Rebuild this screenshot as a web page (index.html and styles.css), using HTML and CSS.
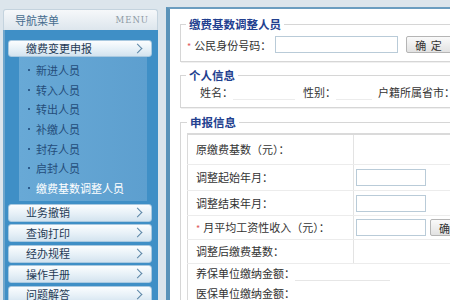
FILE: index.html
```html
<!DOCTYPE html>
<html lang="zh-CN">

<head>
    <meta charset="utf-8">
    <title>缴费基数调整人员</title>
    <link rel="stylesheet" href="styles.css">
</head>

<body>
    <div class="page">
        <aside class="nav">
            <div class="nav-head">
                <span class="nav-title">导航菜单</span>
                <span class="nav-menu">MENU</span>
            </div>
            <div class="nav-body">
                <a class="nav-btn">缴费变更申报<span class="chev"></span></a>
                <ul class="sub">
                    <li>新进人员</li>
                    <li>转入人员</li>
                    <li>转出人员</li>
                    <li>补缴人员</li>
                    <li>封存人员</li>
                    <li>启封人员</li>
                    <li class="on">缴费基数调整人员</li>
                </ul>
                <a class="nav-btn">业务撤销<span class="chev"></span></a>
                <a class="nav-btn">查询打印<span class="chev"></span></a>
                <a class="nav-btn">经办规程<span class="chev"></span></a>
                <a class="nav-btn">操作手册<span class="chev"></span></a>
                <a class="nav-btn">问题解答<span class="chev"></span></a>
            </div>
        </aside>

        <main class="content">
            <fieldset class="box box-search">
                <legend>缴费基数调整人员</legend>
                <div class="search-row">
                    <label><i class="req">*</i>公民身份号码：</label>
                    <input type="text" class="txt txt-id">
                    <button class="btn">确 定</button>
                </div>
            </fieldset>

            <fieldset class="box box-person">
                <legend>个人信息</legend>
                <div class="person-row">
                    <span class="pl">姓名：</span><span class="pv pv-name"></span>
                    <span class="pl">性别：</span><span class="pv pv-sex"></span>
                    <span class="pl">户籍所属省市：</span>
                </div>
            </fieldset>

            <fieldset class="box box-report">
                <legend>申报信息</legend>
                <table class="grid">
                    <colgroup>
                        <col class="c1">
                        <col>
                    </colgroup>
                    <tr class="r1">
                        <td>原缴费基数（元）：</td>
                        <td></td>
                    </tr>
                    <tr class="r2">
                        <td>调整起始年月：</td>
                        <td><input type="text" class="txt txt-s"></td>
                    </tr>
                    <tr class="r3">
                        <td>调整结束年月：</td>
                        <td><input type="text" class="txt txt-s"></td>
                    </tr>
                    <tr class="r4">
                        <td><i class="req">*</i>月平均工资性收入（元）：</td>
                        <td><input type="text" class="txt txt-s"><button class="btn btn-s">确 定</button></td>
                    </tr>
                    <tr class="r5">
                        <td>调整后缴费基数：</td>
                        <td></td>
                    </tr>
                    <tr class="r6">
                        <td colspan="2">养保单位缴纳金额：<span class="amt"></span></td>
                    </tr>
                    <tr class="r7">
                        <td colspan="2">医保单位缴纳金额：<span class="amt"></span></td>
                    </tr>
                </table>
            </fieldset>
        </main>
    </div>
</body>

</html>
```

FILE: styles.css
```css
* {
    box-sizing: border-box;
}

html,
body {
    margin: 0;
    height: 100%;
    overflow: hidden;
}

body {
    background: #dce5ec;
    font-family: "Noto Sans CJK SC", "DejaVu Sans", sans-serif;
    font-size: 11px;
    color: #333;
}

.page {
    display: flex;
    height: 100%;
    padding-left: 3px;
}

/* left navigation */

.nav {
    width: 155px;
    margin-top: 9px;
    flex: none;
    display: flex;
    flex-direction: column;
}

.nav-head {
    flex: none;
    height: 21px;
    display: flex;
    align-items: center;
    justify-content: space-between;
    padding: 0 8px 0 11px;
    background: linear-gradient(#f6f8fa, #dde6ed);
    border: 1px solid #c4d3de;
    border-bottom: none;
    border-radius: 3px 3px 0 0;
}

.nav-title {
    color: #456c8e;
    line-height: 1;
}

.nav-menu {
    font-family: "DejaVu Serif", serif;
    font-size: 8.5px;
    letter-spacing: 1px;
    color: #8e9aa4;
}

.nav-body {
    flex: 1;
    min-height: 0;
    background: #3f8fc6;
    border-left: 2px solid #6fa6cc;
    padding: 10px 0 0 3px;
}

.nav-btn {
    display: flex;
    align-items: center;
    position: relative;
    width: 144px;
    height: 18px;
    margin-bottom: 2.5px;
    padding-left: 17px;
    background: linear-gradient(#fbfdfe, #e6f0f7 55%, #d3e3ef);
    border: 1px solid #a9c9e0;
    border-radius: 3px;
    color: #1f3a55;
    line-height: 1;
}

.nav-btn:first-child {
    margin-bottom: 0;
    height: 17px;
}

.chev {
    position: absolute;
    right: 10px;
    top: 50%;
    width: 7px;
    height: 7px;
    margin-top: -4px;
    border-top: 1.5px solid #5c86a6;
    border-right: 1.5px solid #5c86a6;
    transform: rotate(45deg);
}

.sub {
    list-style: none;
    margin: 0 0 3px 11px;
    padding: 3px 0;
    width: 128px;
    background: linear-gradient(90deg, #68a9d6, #5d9fcf);
}

.sub li {
    height: 19.7px;
    display: flex;
    align-items: center;
    padding-left: 17px;
    position: relative;
    color: #244d7a;
}

.sub li::before {
    content: "";
    position: absolute;
    left: 9px;
    top: 9px;
    width: 2px;
    height: 2px;
    background: #2c5d8e;
}

.sub li.on {
    color: #fff;
}

/* main panel */

.content {
    flex: 1;
    margin: 7px 0 0 8px;
    background: #fff;
    border-left: 4px solid #5b93b9;
    border-top: 2px solid #6b9dc0;
    padding: 8px 0 0 10px;
    overflow: hidden;
}

.box {
    width: 330px;
    margin: 0;
    padding: 0 0 0 5px;
    border: 1px solid #d6d6d6;
    box-shadow: inset 1px 1px 0 #fff, 1px 1px 0 #f0f0f0;
}

.box legend {
    padding: 0 3px;
    font-size: 11.5px;
    font-weight: bold;
    line-height: 14px;
    color: #22408f;
}

.box-search {
    height: 45px;
}

.search-row {
    display: flex;
    align-items: center;
    margin-top: 5px;
    padding-left: 1px;
}

.req {
    font-style: normal;
    color: #e05a5a;
    margin-right: 3px;
    font-size: 9px;
}

.txt {
    height: 17px;
    border: 1px solid #b9cbd8;
    background: #fff;
    padding: 0 2px;
    font: inherit;
}

.txt-id {
    width: 123px;
    margin-left: 4px;
}

.btn {
    height: 17px;
    margin-left: 8px;
    padding: 0 8px;
    border: 1px solid #b5b5b5;
    border-radius: 2px;
    background: linear-gradient(#fafafa, #e2e2e2);
    font: inherit;
    color: #333;
    letter-spacing: 1px;
}

.box-person {
    margin-top: 6px;
    height: 40px;
}

.person-row {
    display: flex;
    align-items: center;
    padding: 2px 0 0 14px;
    height: 18px;
}

.pv {
    height: 14px;
    border-bottom: 1px solid #ececec;
    align-self: flex-end;
}

.pv-name {
    width: 62px;
    margin-right: 8px;
}

.pv-sex {
    width: 36px;
    margin-right: 6px;
}

.box-report {
    margin-top: 7px;
    padding: 4px 0 0 6px;
    height: 200px;
}

.grid {
    width: 320px;
    table-layout: fixed;
    border-collapse: collapse;
    border-top: 2px solid #dadada;
    border-left: 1px solid #dadada;
}

.grid .c1 {
    width: 166px;
}

.grid td {
    padding: 0 0 0 8px;
    border-bottom: 1px solid #ececec;
    vertical-align: middle;
    white-space: nowrap;
}

.grid td:first-child:not([colspan]) {
    border-right: 1px solid #e3e3e3;
}

.grid td + td {
    padding-left: 2px;
}

.r1 { height: 30px; }
.r2 { height: 26px; }
.r3 { height: 25px; }
.r4 { height: 24px; }
.r5 { height: 24px; }
.r6 { height: 20px; }
.r7 { height: 20px; }

.r6 td,
.r7 td {
    border-bottom: none;
}

.txt-s {
    width: 70px;
    vertical-align: middle;
}

.btn-s {
    margin-left: 4px;
    vertical-align: middle;
}

.amt {
    display: inline-block;
    width: 95px;
    height: 12px;
    vertical-align: middle;
    border-bottom: 1px solid #e6e6e6;
}
```
